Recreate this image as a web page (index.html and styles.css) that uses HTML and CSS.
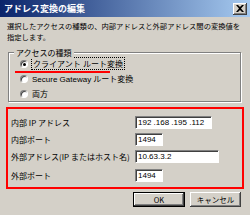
FILE: index.html
```html
<!DOCTYPE html>
<html lang="ja">
<head>
<meta charset="utf-8">
<link rel="stylesheet" href="styles.css">
</head>
<body>
<div class="win">
  <div class="titlebar">
    <span class="title">アドレス変換の編集</span>
    <span class="close"><svg width="8" height="7" viewBox="0 0 8 7"><path d="M0 0h2l2 2 2-2h2L5 3.5 8 7H6L4 5 2 7H0l3-3.5z" fill="#000"/></svg></span>
  </div>
  <div class="body">
    <p class="desc">選択したアクセスの種類の、内部アドレスと外部アドレス間の変換値を<br>指定します。</p>
    <div class="group">
      <span class="legend">アクセスの種類</span>
      <div class="radio"><span class="dot on"></span><span class="focus">クライアント ルート変換</span></div>
      <div class="radio"><span class="dot"></span><span>Secure Gateway ルート変換</span></div>
      <div class="radio"><span class="dot"></span><span>両方</span></div>
      <span class="underline"></span>
    </div>
    <div class="fields">
      <div class="row"><span class="lbl">内部 IP アドレス</span><span class="input w1">192 .168 .195 .112</span></div>
      <div class="row"><span class="lbl">内部ポート</span><span class="input w2">1494</span></div>
      <div class="row"><span class="lbl">外部アドレス(IP またはホスト名)</span><span class="input w3">10.63.3.2</span></div>
      <div class="row"><span class="lbl">外部ポート</span><span class="input w2">1494</span></div>
    </div>
    <div class="buttons">
      <span class="btn default">OK</span>
      <span class="btn">キャンセル</span>
    </div>
  </div>
</div>
</body>
</html>
```
FILE: styles.css
```css
html, body { margin: 0; padding: 0; }
body {
  width: 250px; height: 215px; overflow: hidden;
  background: #d4d0c8;
  font-family: "Liberation Sans", "Noto Sans CJK JP", sans-serif;
  font-size: 8px; color: #000;
}
.win { width: 250px; height: 215px; display: flex; flex-direction: column; }
.titlebar {
  height: 17px; flex: none;
  background: linear-gradient(to right, #0a246a, #a6caf0);
  display: flex; align-items: center; justify-content: space-between;
  padding: 0 3px 0 4px;
}
.title { color: #fff; font-weight: bold; font-size: 9px; font-family: "Noto Sans CJK JP", sans-serif; }
.close {
  width: 14px; height: 12px; background: #d4d0c8;
  box-shadow: inset -1px -1px #404040, inset 1px 1px #fff, inset -2px -2px #808080;
  display: flex; align-items: center; justify-content: center;
}
.body { padding: 4px 7px 0 7px; display: flex; flex-direction: column; }
.desc { margin: 0; line-height: 11px; font-size: 7.3px; white-space: nowrap; font-family: "Noto Sans CJK JP", sans-serif; }
.group {
  position: relative; margin: 9px 2px 0 1px; height: 50px; box-sizing: border-box;
  border: 1px solid #808080; box-shadow: 1px 1px #fff, inset 1px 1px #fff;
  padding: 5px 0 0 11px; display: flex; flex-direction: column; gap: 4px;
}
.legend { position: absolute; top: -6px; left: 5px; background: #d4d0c8; padding: 0 2px; line-height: 11px; font-family: "Noto Sans CJK JP", sans-serif; }
.radio { display: flex; align-items: center; gap: 4px; height: 11px; flex: none; }
.dot {
  width: 8px; height: 8px; border-radius: 50%; background: #fff; flex: none;
  border: 1px solid #808080; border-right-color: #fff; border-bottom-color: #fff;
  box-sizing: border-box; position: relative; box-shadow: inset 1px 1px #404040;
}
.dot.on::after { content: ""; position: absolute; left: 2px; top: 2px; width: 3px; height: 3px; border-radius: 50%; background: #000; }
.focus { outline: 1px dotted #000; outline-offset: 0; padding: 0 1px; }
.underline { position: absolute; left: 6px; top: 18px; width: 95px; height: 2px; background: #f00; z-index: 2; }
.fields {
  margin: 5px -1px 0 -1px; height: 82px; box-sizing: border-box;
  border: 2px solid #f00; padding: 7px 0 0 3px;
  display: flex; flex-direction: column; gap: 4px;
}
.row { display: flex; align-items: center; height: 13px; flex: none; }
.row:nth-child(4) { margin-top: 2px; }
.lbl { width: 124px; flex: none; font-family: "Noto Sans CJK JP", sans-serif; font-size: 8px; }
.input {
  height: 13px; box-sizing: border-box; background: #fff;
  border: 1px solid #808080; border-right-color: #fff; border-bottom-color: #fff;
  box-shadow: inset 1px 1px #404040; padding: 0 2px; line-height: 11px; font-size: 8px;
}
.w1 { width: 77px; }
.w2 { width: 28px; }
.w3 { width: 84px; }
.buttons { display: flex; justify-content: flex-end; gap: 5px; margin: 3px 2px 0 0; }
.btn {
  height: 15px; width: 51px; box-sizing: border-box;
  display: flex; align-items: center; justify-content: center;
  box-shadow: inset -1px -1px #404040, inset 1px 1px #fff, inset -2px -2px #808080;
  font-family: "Noto Sans CJK JP", sans-serif; font-size: 7.5px;
}
.btn.default { width: 52px; border: 1px solid #000; }
```
